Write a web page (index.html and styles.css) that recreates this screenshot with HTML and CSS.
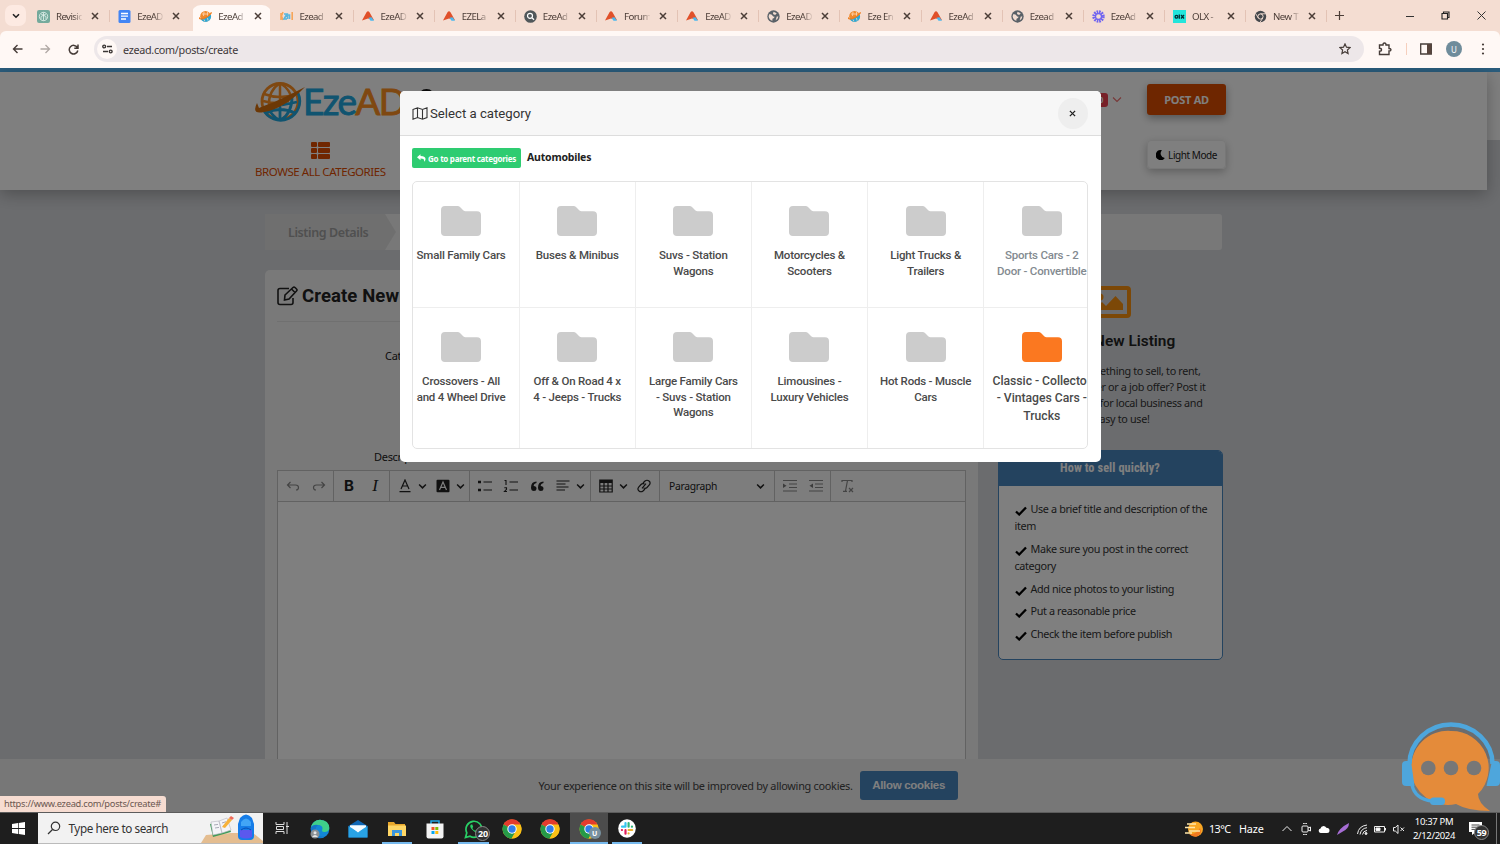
FILE: index.html
```html
<!DOCTYPE html>
<html lang="en">
<head>
<meta charset="utf-8">
<title>EzeAD - Create New Listing</title>
<link rel="stylesheet" href="styles.css">
</head>
<body>
<svg class="defs" width="0" height="0">
  <symbol id="x" viewBox="0 0 8 8"><path d="M1 1l6 6M7 1L1 7" fill="none" stroke="currentColor" stroke-width="1.500"/></symbol>
  <symbol id="folder" viewBox="0 0 40 30"><path d="M4 0h12.500q1.500 0 2.500 1l3.500 3.500q.8.800 2 .8H36q4 0 4 4V26q0 4-4 4H4q-4 0-4-4V4q0-4 4-4z" fill="currentColor"/></symbol>
  <symbol id="tri" viewBox="0 0 12 10"><path d="M4.500 1.200q1.500-2 3 0L12 9.300 6 7.500 0 9.500z" fill="#e0502a"/><path d="M6.500 6.800l3-.6 2.500 3.600H8.500z" fill="#4ab9f0"/></symbol>
  <symbol id="planet" viewBox="0 0 13 13"><circle cx="6.500" cy="6.300" r="5.300" fill="#f08a2c"/><path d="M1.500 8.500Q8 8.500 11.700 4.500A5.300 5.300 0 0 1 1.500 8.500z" fill="#2aa8d8"/><path d="M3 4h6.500M5 2L4.500 6M8.500 2v4M5 9.500l1 1.800M8.500 8l.5 2.500" fill="none" stroke="#ffd8b8" stroke-width=".8"/><path d="M.5 7.300Q0 9.500 3.500 8.800 9 7.500 12.600 2.500" fill="none" stroke="#ef7d1d" stroke-width="1.300"/></symbol>
  <symbol id="globe" viewBox="0 0 12 12"><circle cx="6" cy="6" r="5.700" fill="#5a6168"/><path d="M2 4q2-.5 3 1t2 1q0 2-2 2v2Q2 9 1.500 6zM6 1.500l3 1.500-1.500 1.500-2-.8zM9 6l1.500 0Q10 9 8 9.500z" fill="#f3ddd2"/></symbol>
  <symbol id="chrome" viewBox="0 0 20 20"><circle cx="10" cy="10" r="9.500" fill="#fbc116"/><path d="M10 10L1.500 5.500A9.500 9.500 0 0 1 18.400 5.500z" fill="#e33b2e"/><path d="M10 10L1.600 5.500A9.500 9.500 0 0 0 9.600 19.500L14 12z" fill="#269a48"/><path d="M10 5.500h8.400a9.500 9.500 0 0 1-8.800 14L14 12z" fill="#fbc116"/><circle cx="10" cy="10" r="4.700" fill="#fff"/><circle cx="10" cy="10" r="3.700" fill="#2f7de9"/></symbol>
  <symbol id="chev" viewBox="0 0 8 6"><path d="M1 1.200l3 3 3-3" fill="none" stroke="currentColor" stroke-width="1.300"/></symbol>
  <symbol id="check" viewBox="0 0 12 10"><path d="M1 5.500l3.200 3L11 1.500" fill="none" stroke="#000" stroke-width="2.300"/></symbol>
</svg>
<div class="screen">
<header class="browser">
  <div class="tabstrip">
    <div class="tabsearch"><svg width="8" height="6"><path d="M1 1.200l3 3 3-3" fill="none" stroke="#222" stroke-width="1.600"/></svg></div>
    <div class="tab"><svg class="fav" viewBox="0 0 13 13"><rect width="13" height="13" rx="2" fill="#74aa9c"/><g fill="none" stroke="#e4f2ee" stroke-width=".8"><circle cx="6.500" cy="6.500" r="4.200"/><path d="M4 4l5 2.500v3M9 4L4 6.500v3M6.500 2.500v8"/></g></svg><span class="label">Revisio</span><svg class="close"><use href="#x"/></svg></div>
    <div class="tab"><svg class="fav" viewBox="0 0 13 13"><rect x=".5" width="12" height="13" rx="1.500" fill="#4285f4"/><path d="M3 3.500h7M3 6.200h7M3 9h5" stroke="#fff" stroke-width="1.300"/></svg><span class="label">EzeAD</span><svg class="close"><use href="#x"/></svg></div>
    <div class="tab active"><svg class="fav"><use href="#planet"/></svg><span class="label">EzeAd</span><svg class="close"><use href="#x"/></svg></div>
    <div class="tab"><svg class="fav" viewBox="0 0 13 13"><g fill="none" stroke-width="1.600"><path d="M1 3v7M3 2L1.500 6 3 10" stroke="#f6a55a"/><path d="M4 4h3L4 9h3M7.500 9V5h2v4" stroke="#58b5dc"/><path d="M12.200 2v8" stroke="#f6a55a"/></g></svg><span class="label">Ezead</span><svg class="close"><use href="#x"/></svg></div>
    <div class="tab"><svg class="fav tri"><use href="#tri"/></svg><span class="label">EzeAD</span><svg class="close"><use href="#x"/></svg></div>
    <div class="tab"><svg class="fav tri"><use href="#tri"/></svg><span class="label">EZELa</span><svg class="close"><use href="#x"/></svg></div>
    <div class="tab"><svg class="fav" viewBox="0 0 13 13"><circle cx="6.500" cy="6.500" r="6.300" fill="#50575a"/><circle cx="6" cy="5.800" r="2.500" fill="none" stroke="#fff" stroke-width="1.200"/><path d="M8 7.800l2 2" stroke="#fff" stroke-width="1.300"/></svg><span class="label">EzeAd</span><svg class="close"><use href="#x"/></svg></div>
    <div class="tab"><svg class="fav tri"><use href="#tri"/></svg><span class="label">Forum</span><svg class="close"><use href="#x"/></svg></div>
    <div class="tab"><svg class="fav tri"><use href="#tri"/></svg><span class="label">EzeAD</span><svg class="close"><use href="#x"/></svg></div>
    <div class="tab"><svg class="fav"><use href="#globe"/></svg><span class="label">EzeAD</span><svg class="close"><use href="#x"/></svg></div>
    <div class="tab"><svg class="fav"><use href="#planet"/></svg><span class="label">Eze En</span><svg class="close"><use href="#x"/></svg></div>
    <div class="tab"><svg class="fav tri"><use href="#tri"/></svg><span class="label">EzeAd</span><svg class="close"><use href="#x"/></svg></div>
    <div class="tab"><svg class="fav"><use href="#globe"/></svg><span class="label">Ezead</span><svg class="close"><use href="#x"/></svg></div>
    <div class="tab"><svg class="fav" viewBox="0 0 13 13"><circle cx="6.500" cy="6.500" r="4.700" fill="none" stroke="#6f63f0" stroke-width="3" stroke-dasharray="1.600 .86"/><circle cx="6.500" cy="6.500" r="3" fill="none" stroke="#6f63f0" stroke-width="1.300"/></svg><span class="label">EzeAd</span><svg class="close"><use href="#x"/></svg></div>
    <div class="tab"><svg class="fav" viewBox="0 0 13 13"><rect width="13" height="13" fill="#23e5db"/><circle cx="3.500" cy="6.700" r="1.400" fill="none" stroke="#002f34" stroke-width="1.300"/><path d="M6.300 4.500v4.200M8 5l3 3.500M11 5L8 8.500" stroke="#002f34" stroke-width="1.300"/></svg><span class="label">OLX -</span><svg class="close"><use href="#x"/></svg></div>
    <div class="tab"><svg class="fav" viewBox="0 0 13 13"><circle cx="6.500" cy="6.500" r="5.700" fill="#45484c"/><circle cx="6.500" cy="6.500" r="2.600" fill="#45484c" stroke="#f3ddd2"/><path d="M6.500 3.800h5.300M4.300 8L1.600 3.500M8.800 8L6 12.300" stroke="#f3ddd2" stroke-width=".9"/></svg><span class="label">New T</span><svg class="close"><use href="#x"/></svg></div>
    <svg class="plus" width="9" height="9"><path d="M4.500 0v9M0 4.500h9" stroke="#4b3d37" stroke-width="1.200"/></svg>
    <div class="winbtns">
      <svg width="8" height="10"><path d="M0 5.500h8" stroke="#333"/></svg>
      <svg width="9" height="9" fill="none" stroke="#222" stroke-width="1.100"><path d="M1 2.500h5.500V8H1zM2.500 2V1H8v5.500H7"/></svg>
      <svg width="9" height="9"><path d="M.5.500l8 8M8.500.500l-8 8" stroke="#333"/></svg>
    </div>
  </div>
  <div class="addressbar">
    <div class="nav">
      <svg width="11" height="10" fill="none" stroke="#463c38" stroke-width="1.400"><path d="M10.500 5H1.500M5.500 1L1.500 5l4 4"/></svg>
      <svg width="11" height="10" fill="none" stroke="#b0a8a4" stroke-width="1.300"><path d="M.5 5h9M5.500 1l4 4-4 4"/></svg>
      <svg width="11" height="11" fill="none" stroke="#463c38" stroke-width="1.500"><path d="M9.300 3.500A4.300 4.300 0 1 0 9.800 6.500M10 .5v3.700H6.300"/></svg>
    </div>
    <div class="omnibox">
      <span class="site"><svg width="11" height="10" fill="none" stroke="#3b3634" stroke-width="1.400"><circle cx="2.200" cy="2.500" r="1.400"/><path d="M5 2.500h5M1 7.500h5"/><circle cx="8.700" cy="7.500" r="1.400"/></svg></span>
      <span class="url">ezead.com/posts/create</span>
      <svg class="star" width="12" height="12"><path d="M6 .9l1.500 3.300 3.500.4-2.600 2.400.7 3.600L6 8.800l-3.100 1.800.7-3.600L1 4.600l3.500-.4z" fill="none" stroke="#463c38" stroke-width="1.200"/></svg>
    </div>
    <div class="tools">
      <svg width="14" height="14"><path d="M1.500 3h3.500q0-2 1.500-2t1.500 2h3v3.500q2 0 2 1.200t-2 1.300V12.500H1.500V9.300q2 0 2-1.500t-2-1.500z" fill="none" stroke="#463c38" stroke-width="1.400"/></svg>
      <i class="toolsep"></i>
      <svg width="12" height="12"><path d="M.7 1h10.600v10H.7z" fill="none" stroke="#463c38" stroke-width="1.300"/><path d="M7 1h4.300v10H7z" fill="#57443c"/></svg>
      <b class="avatar">U</b>
      <svg class="dots" width="4" height="12" fill="#463c38"><circle cx="2" cy="1.500" r="1.100"/><circle cx="2" cy="6" r="1.100"/><circle cx="2" cy="10.500" r="1.100"/></svg>
    </div>
  </div>
</header>

<main class="page">
  <div class="strip"></div>
  <div class="topbg"><div class="header">
    <div class="row1">
      <div class="logo">
        <svg width="52" height="42" viewBox="0 0 52 42"><circle cx="25" cy="20.500" r="18" fill="none" stroke="#ff9022" stroke-width="2.800"/><g fill="none" stroke="#ff9022" stroke-width="2.500"><path d="M9 13q16 6 32 0M25 2v20M25 2Q13 10 14 25M25 2q11 7 12 17M8 20q14 4 26 0"/></g><g fill="none" stroke="#20a8e0" stroke-width="2.800"><path d="M8 28a18.500 18.500 0 0 0 35-16M11 32q14-7 29 0M25 24v15M14 28q3 7 10 11M37 16q0 16-11 23M27 24l15-3"/></g><path d="M2 22Q-4 34 9 31 29 28 50 6 33 15 17 22 8 25 4 27z" fill="#d9700c"/></svg>
        <span class="word"><span>Eze</span><em>AD</em></span>
        <i class="pin"></i>
      </div>
      <div class="account"><span class="badge">0</span><svg width="10" height="7"><path d="M1 1.500l4 4 4-4" fill="none" stroke="#f07070" stroke-width="1.100"/></svg><a class="post">POST AD</a></div>
    </div>
    <div class="row2">
      <div class="browse"><svg width="19" height="17" fill="#e04c00"><rect y="0" width="6" height="5" rx="1"/><rect x="7" width="12" height="5" rx="1"/><rect y="6" width="6" height="5" rx="1"/><rect x="7" y="6" width="12" height="5" rx="1"/><rect y="12" width="6" height="5" rx="1"/><rect x="7" y="12" width="12" height="5" rx="1"/></svg><span>BROWSE ALL CATEGORIES</span></div>
      <a class="mode"><svg width="9" height="10"><path d="M6 .3A5 5 0 1 0 8.800 8 4.500 4.500 0 0 1 6 .3z"/></svg>Light Mode</a>
    </div>
  </div></div>
  <div class="wrap">
    <div class="steps"><span class="step">Listing Details</span></div>
    <div class="columns">
      <section class="card">
        <h1><svg width="22" height="20" fill="none" stroke="#222" stroke-width="1.600"><path d="M12 2.500H3q-2 0-2 2v12q0 2 2 2h11q2 0 2-2V12"/><path d="M8 9l8-7.500q1-.9 2 0l1.500 1.500q1 1 0 2L12 13l-4.500 1zM14.500 3l3.500 3.500"/></svg>Create New Listing</h1>
        <div class="field cat">Category *</div>
        <div class="field desc">Description *</div>
        <div class="editor">
          <div class="edbar">
            <div class="grp dim"><svg class="ic" viewBox="0 0 14 14"><path d="M4.500 3L1.500 6l3 3M1.500 6h8q3 0 3 2.500T10 11" /></svg><svg class="ic" viewBox="0 0 14 14"><path d="M9.500 3l3 3-3 3M12.500 6h-8q-3 0-3 2.500T4 11"/></svg></div>
            <div class="grp"><b class="ic bold">B</b><i class="ic ital">I</i></div>
            <div class="grp"><svg class="ic" viewBox="0 0 14 14"><path d="M3 10l4-9 4 9M4.500 7h5M1.500 12.700h11"/></svg><svg class="cv"><use href="#chev"/></svg><svg class="ic" viewBox="0 0 14 14"><rect x=".5" y=".8" width="13" height="12.400" rx="1" fill="#222" stroke="none"/><path d="M3.500 11L7 3l3.500 8M5 8.300h4" stroke="#fff"/></svg><svg class="cv"><use href="#chev"/></svg></div>
            <div class="grp"><svg class="ic" viewBox="0 0 14 14"><path d="M5.500 3H14M5.500 11H14"/><path d="M0 3h3M0 11h3" stroke-width="2.600"/></svg><svg class="ic" viewBox="0 0 14 14"><path d="M5.500 3H14M5.500 11H14M.5 1.500H2V6M.3 8.800h2.200v1.500L.5 12.500h2.500" stroke-width="1.100"/></svg><svg class="ic" viewBox="0 0 14 14"><path d="M6.500 2.500Q1 2.500 1 8.500 1 12 4 12q2.500 0 2.500-2.300Q6.500 7 3.700 7q0-2.500 2.800-3zM13.500 2.500Q8 2.500 8 8.500q0 3.500 3 3.500 2.500 0 2.500-2.300Q13.500 7 10.700 7q0-2.500 2.800-3z" fill="#222" stroke="none"/></svg><svg class="ic" viewBox="0 0 14 14"><path d="M.5 2h13M.5 5h9M.5 8h12M.5 11h8.500"/></svg><svg class="cv"><use href="#chev"/></svg></div>
            <div class="grp"><svg class="ic" viewBox="0 0 14 14"><path d="M.8 1h12.400v12H.8zM1 7h12M1 10h12M5 4v9M9 4v9"/><path d="M1 2.500h12" stroke-width="3"/></svg><svg class="cv"><use href="#chev"/></svg><svg class="ic" viewBox="0 0 14 14"><path d="M6 4l2-2q2-1.500 4 0t.3 4L10 8.500q-1.500 1.500-3.500.5M8 10l-2 2q-2 1.500-4 0t-.3-4L4 5.500Q5.500 4 7.500 5M5 9.300l4-4.600"/></svg></div>
            <div class="grp para"><span>Paragraph</span><svg class="cv"><use href="#chev"/></svg></div>
            <div class="grp dim"><svg class="ic" viewBox="0 0 14 14"><path d="M0 1.500h14M6 5h8M6 8.500h8M0 12h14"/><path d="M0 4.500l3.500 2.300L0 9z" fill="#777" stroke="none"/></svg><svg class="ic" viewBox="0 0 14 14"><path d="M0 1.500h14M6 5h8M6 8.500h8M0 12h14"/><path d="M4 4.500L.5 6.800 4 9z" fill="#777" stroke="none"/></svg></div>
            <div class="grp dim last"><svg class="ic" viewBox="0 0 14 14"><path d="M2 3V1.500h10V3M7.500 1.500L5.500 12M3 12.300h4M9 9l4 4M13 9l-4 4"/></svg></div>
          </div>
        </div>
      </section>
      <aside>
        <svg class="pic" width="42" height="32"><rect x="2" y="2" width="38" height="28" rx="2" fill="none" stroke="#f9910f" stroke-width="4"/><circle cx="11" cy="11" r="3.500" fill="#f9910f"/><path d="M7 24v-2l6-6 4 4 9.500-10 7.500 8v6z" fill="#f9910f"/></svg>
        <h2>Create New Listing</h2>
        <p class="blurb"><span class="l1">Do you have something to sell, to rent,</span><span class="l2">any service to offer or a job offer? Post it</span><span class="l3">at EzeAd for local business and</span><span class="l4">more. It's easy to use!</span></p>
        <div class="tips">
          <h3>How to sell quickly?</h3>
          <ul>
            <li><svg width="12" height="10"><use href="#check"/></svg>Use a brief title and description of the<br>item</li>
            <li><svg width="12" height="10"><use href="#check"/></svg>Make sure you post in the correct<br>category</li>
            <li><svg width="12" height="10"><use href="#check"/></svg>Add nice photos to your listing</li>
            <li><svg width="12" height="10"><use href="#check"/></svg>Put a reasonable price</li>
            <li><svg width="12" height="10"><use href="#check"/></svg>Check the item before publish</li>
          </ul>
        </div>
      </aside>
    </div>
  </div>
  <div class="cookies"><span>Your experience on this site will be improved by allowing cookies.</span><a>Allow cookies</a></div>
  <div class="overlay"></div>
  <div class="modal">
    <div class="mhead"><svg width="16" height="13" fill="none" stroke="#333" stroke-width="1.100"><path d="M1 2.500l4.500-1.700 5 1.700L15 .8v9.700l-4.500 1.700-5-1.700L1 12.200zM5.500.8v9.700M10.500 2.500v9.700"/></svg><span>Select a category</span><b class="mclose"><svg width="7" height="7"><use href="#x"/></svg></b></div>
    <div class="mbody">
      <div class="crumb"><a><svg width="9" height="8"><path d="M0 3.200L3.500.2v1.800Q9 2 8.500 5.500 8.300 7 7 7.800 8 4.500 3.500 4.500v1.800z" fill="#fff"/></svg>Go to parent categories</a><b>Automobiles</b></div>
      <div class="cats"><div class="catgrid">
        <div class="c"><svg><use href="#folder"/></svg><span>Small Family Cars</span></div>
        <div class="c"><svg><use href="#folder"/></svg><span>Buses &amp; Minibus</span></div>
        <div class="c"><svg><use href="#folder"/></svg><span>Suvs - Station<br>Wagons</span></div>
        <div class="c"><svg><use href="#folder"/></svg><span>Motorcycles &amp;<br>Scooters</span></div>
        <div class="c"><svg><use href="#folder"/></svg><span>Light Trucks &amp;<br>Trailers</span></div>
        <div class="c fade"><svg><use href="#folder"/></svg><span>Sports Cars - 2<br>Door - Convertible</span></div>
        <div class="c"><svg><use href="#folder"/></svg><span>Crossovers - All<br>and 4 Wheel Drive</span></div>
        <div class="c"><svg><use href="#folder"/></svg><span>Off &amp; On Road 4 x<br>4 - Jeeps - Trucks</span></div>
        <div class="c"><svg><use href="#folder"/></svg><span>Large Family Cars<br>- Suvs - Station<br>Wagons</span></div>
        <div class="c"><svg><use href="#folder"/></svg><span>Limousines -<br>Luxury Vehicles</span></div>
        <div class="c"><svg><use href="#folder"/></svg><span>Hot Rods - Muscle<br>Cars</span></div>
        <div class="c hot"><svg><use href="#folder"/></svg><span>Classic - Collector<br>- Vintages Cars -<br>Trucks</span></div>
      </div></div>
    </div>
  </div>
  <svg class="chat" width="98" height="90" viewBox="0 0 98 90"><path d="M49 9a37 37 0 1 0 5 73q12 7 34 7-12-8-12-17A37 37 0 0 0 49 9z" fill="#e48b3a"/><g fill="#777"><circle cx="26.300" cy="46" r="7.300"/><circle cx="49" cy="46" r="7.300"/><circle cx="72" cy="46" r="7.300"/></g><path d="M7.500 42A41.500 39.500 0 0 1 90.500 42" fill="none" stroke="#4ea6dc" stroke-width="4.500"/><path d="M4 39h5l3.500 25H4q-4 0-4-4V43q0-4 4-4zM90 39h4q4 0 4 4v17q0 4-4 4H84.500z" fill="#4ea6dc"/><path d="M10 63q3 14 20 16" fill="none" stroke="#4ea6dc" stroke-width="3.500"/><rect x="28" y="75.500" width="15" height="7.500" rx="3.500" fill="#4ea6dc"/></svg>
  <div class="status">https://www.ezead.com/posts/create#</div>
</main>

<footer class="taskbar">
  <div class="start"><svg width="13" height="13" fill="#fff"><path d="M0 2l6-.9v5H0zM6.700 1L13 0v6.100H6.700zM0 6.900h6v5L0 11zM6.700 6.900H13V13l-6.300-1z"/></svg></div>
  <div class="search"><svg width="14" height="14" fill="none" stroke="#333" stroke-width="1.200"><circle cx="8.500" cy="5.300" r="4.200"/><path d="M5.500 8.500L1 13"/></svg><span>Type here to search</span>
    <svg class="art" width="62" height="30"><path d="M0 30l5-8 25-2h22l10 8v2z" fill="#e4bd90"/><path d="M9 11l17-4 4 12-18 5z" fill="#3d9b57"/><path d="M10 9l8-1 3 12-9 2zM18 8l8-3 4 12-9 3z" fill="#f4f4f8" stroke="#b5b5c0" stroke-width=".6"/><path d="M13 12l4-.6M14 15l4-.6M21 10l4-1.300M22 13l4-1.300" stroke="#889" stroke-width=".7"/><path d="M21 14l7-9 3 2-7 8z" fill="#f7b23b"/><path d="M28 5l2-2 3 2-2 2z" fill="#f06a5a"/><path d="M39 5q6-7 12 0l2 6v12q0 4-4 4h-8q-4 0-4-4V11z" fill="#167de8"/><path d="M40 9q5-7 10 0v4H40z" fill="#42a5f6"/><path d="M39 17h12v7q-6 3-12 0z" fill="#5b58ee"/><path d="M40 17q5-4 10 0" fill="none" stroke="#0a4eb4"/></svg></div>
  <div class="t"><svg width="14" height="13" fill="none" stroke="#ddd"><path d="M1 0v2.500h8V0M1 12v-2.500h8V12M1.500 4.500h7v3h-7zM12 0v12M11 4.500h3"/></svg></div>
  <div class="t"><svg width="20" height="20"><circle cx="10" cy="10" r="9.300" fill="#1287d6"/><path d="M1 8Q3 1 10 .7q9 .3 9.300 8.300-.3 4-5 4-3 0-2-2.500 1-3.500-3-4.500Q4 5.500 1 8z" fill="#3fd08a"/><path d="M1 8q3-3 7-2Q4 9 6 14t10 3Q10 21 4 17 0 13 1 8z" fill="#1476c8"/><circle cx="5" cy="15" r="4.500" fill="#8a9094"/><circle cx="5" cy="13.700" r="1.500" fill="#e5e5e5"/><path d="M2 18q3-4 6 0" fill="#e5e5e5"/></svg></div>
  <div class="t"><svg width="20" height="18"><path d="M.5 6L10 0l9.500 6v11.500H.5z" fill="#0f66b4"/><path d="M2 5.500h16v8H2z" fill="#f5fbff"/><path d="M.5 6l9.500 6 9.500-6v11.500H.5z" fill="#29a3e6"/><path d="M2 5.500h16l-8 7z" fill="#f5fbff"/></svg></div>
  <div class="t on"><svg width="18" height="16"><path d="M0 1h6l1.500 2H17v12H0z" fill="#e9a82c"/><path d="M0 4.500h18V15H0z" fill="#ffd766"/><path d="M4 15V9h10v6h-3v-3H7v3z" fill="#3c96dc"/></svg></div>
  <div class="t"><svg width="18" height="20"><path d="M5 5V2h8v3" fill="none" stroke="#22a8e8" stroke-width="1.500"/><path d="M.5 4.500h17v13q0 2-2 2h-13q-2 0-2-2z" fill="#f4f4f4"/><path d="M5.500 8h3v3h-3z" fill="#f35325"/><path d="M9.300 8h3v3h-3z" fill="#81bc06"/><path d="M5.500 12h3v3h-3z" fill="#05a6f0"/><path d="M9.300 12h3v3h-3z" fill="#ffba08"/></svg></div>
  <div class="t on"><svg width="20" height="20" fill="none" stroke="#29cf66" stroke-width="1.700"><path d="M1.500 18.500l1.300-4.700A8 8 0 1 1 6 17.200z"/><path d="M7 5.500q-2 1.500 1 5t6 3q1.500-1.500 0-2l-1.500-.8-1.300 1Q9 11 8.300 9l.9-1-.9-2.500z" fill="#29cf66" stroke="none"/></svg><b class="n20">20</b></div>
  <div class="t"><svg width="20" height="20"><use href="#chrome"/></svg></div>
  <div class="t"><svg width="20" height="20"><use href="#chrome"/></svg></div>
  <div class="t on cur"><svg width="20" height="20"><use href="#chrome"/></svg><b class="nu">U</b></div>
  <div class="t on"><svg width="18" height="19"><ellipse cx="9" cy="9.500" rx="8.800" ry="9.300" fill="#fff"/><g stroke-width="2.200" stroke-linecap="round"><path d="M7.500 4v3.200M4 7.700h3.500" stroke="#36c5f0"/><path d="M10.600 4v3.700M14 7.700h-.1" stroke="#2eb67d"/><path d="M10.600 11h3.600M10.600 14.500v-.1" stroke="#ecb22e"/><path d="M7.500 11.200v3.500M3.900 11h.1" stroke="#e01e5a"/></g></svg></div>
  <div class="tray">
    <svg class="sun" width="20" height="18"><circle cx="11.500" cy="9" r="7.500" fill="#f8a623"/><path d="M5 14q7 1 11-6 3 6-3 8.500-4 1-8-2.500z" fill="#f27a21"/><path d="M3 4h9M1 7.500h10M5 11h11M1 13h7" stroke="#ffe6a8" stroke-width="1.300"/></svg>
    <span class="temp">13°C</span><span class="haze">Haze</span>
    <div class="icons">
      <svg viewBox="0 0 12 12"><path d="M1.500 8L6 3.500 10.500 8"/></svg>
      <svg viewBox="0 0 12 12"><rect x="2" y="3" width="6" height="6" rx="1"/><path d="M8 5l2.500-1v4L8 7M3 .5q2-.8 4 0M3 11.500q2 .8 4 0"/></svg>
      <svg viewBox="0 0 12 12"><path d="M2.500 10a2.300 2.300 0 0 1 0-4.500Q3 3 5.500 3q2 0 2.800 1.800Q11.500 5 11.500 7.500 11.500 10 9 10z" fill="#fff" stroke="none"/></svg>
      <svg viewBox="0 0 12 12"><path d="M0 12Q2 5 12 0 12 6 5 9z" fill="#a66dd4" stroke="none"/></svg>
      <svg viewBox="0 0 12 12"><path d="M1.500 11Q2.500 3 11 2M4 11.500Q5 5.500 11 4.700M6.500 11.500Q7 8 11 7.400"/><circle cx="10" cy="10.500" r="1" fill="#eee"/></svg>
      <svg viewBox="0 0 12 12"><path d="M.5 3.500h10v5.500h-10zM11.500 5v2.500"/><path d="M2 5h4v2.500H2z" fill="#fff"/></svg>
      <svg viewBox="0 0 12 12"><path d="M.5 4.500h1.800L5 2v8.500L2.300 8H.5zM7.500 4.500l3.500 3.500M11 4.500L7.500 8"/></svg>
    </div>
    <div class="clock">10:37 PM<br>2/12/2024</div>
    <div class="notif"><svg width="14" height="14"><path d="M0 0h13v10H7l-4 3v-3H0z" fill="#fff"/><path d="M2.500 3h8M2.500 5.200h8M2.500 7.400h5" stroke="#333" stroke-width=".9"/></svg><b>59</b></div>
  </div>
</footer>
</div>
</body>
</html>
```
FILE: styles.css
```css
* { box-sizing: border-box; }
body { margin: 0; font-family: "Noto Sans", "Open Sans", sans-serif; }
.defs { position: absolute; }
.screen { width: 1500px; height: 844px; overflow: hidden; display: flex; flex-direction: column; }
h1, h2, h3, p, ul { margin: 0; padding: 0; }
svg { flex: none; display: block; }

/* Browser window */
.browser { height: 68px; flex: none; background: #f4ddd2; }
.tabstrip { height: 31px; display: flex; align-items: center; padding-left: 5px; color: #4b3d37; }
.tabsearch { width: 21px; height: 21px; margin-right: 3px; border-radius: 7px; background: #fdeae2; display: grid; place-items: center; color: #222; }
.tab { width: 81.15px; height: 26px; margin-top: 1px; flex: none; display: flex; align-items: center; padding-left: 8px; position: relative; }
.tab:not(.active)::after { content: ""; width: 1px; height: 12px; background: #e3c3b5; margin-left: 10px; }
.tab.active { height: 26px; margin-top: 5px; padding-bottom: 4px; background: linear-gradient(#fff8f5, #fff8f5) 2px 0 / 77px 26px no-repeat; border-radius: 10px 10px 0 0; }
.tab:nth-child(3)::after { visibility: hidden; }
.fav { width: 13px; height: 13px; }
.fav.tri { width: 12px; height: 10px; margin-right: 1px; }
.label { width: 27px; margin-left: 6px; overflow: hidden; white-space: nowrap; font-size: 9.7px; letter-spacing: -.6px; -webkit-mask-image: linear-gradient(90deg, #000 65%, rgba(0,0,0,.1)); }
.close { width: 8px; height: 8px; margin-left: 9px; }
.plus { margin-left: 8px; }
.winbtns { margin-left: auto; display: flex; align-items: center; gap: 27px; padding-right: 14px; }
.addressbar { height: 37px; background: #fff8f5; border-radius: 6px 6px 0 0; display: flex; align-items: center; padding-bottom: 1px; }
.nav { width: 94px; display: flex; align-items: center; padding-left: 12px; gap: 17px; }
.omnibox { width: 1270px; height: 26px; border-radius: 13px; background: #ede7e9; display: flex; align-items: center; padding: 0 13px 0 3px; }
.site { width: 20px; height: 20px; border-radius: 50%; background: #fff8f5; display: grid; place-items: center; }
.url { margin-left: 6px; font-size: 10.8px; letter-spacing: -.3px; color: #40383a; }
.star { margin-left: auto; }
.tools { flex: 1; display: flex; align-items: center; padding-left: 14px; }
.toolsep { width: 1px; height: 12px; background: #f6cfbd; margin: 0 13px 0 14px; }
.avatar { width: 16px; height: 16px; margin: 0 19px 0 14px; border-radius: 50%; background: #6f8c9b; color: #fff; font-size: 8px; font-weight: 400; display: grid; place-items: center; }

/* Site */
.page { height: 745px; flex: none; position: relative; overflow: hidden; background: #d7d9dd; border-bottom: 1px solid #5c5c5c; }
.strip { height: 4px; background: #56bafa; }
.topbg { height: 118px; background: linear-gradient(#fff, #fff) 0 0 / 100% 68px no-repeat; }
.header { width: 1487px; height: 118px; background: #fff; box-shadow: 0 4px 16px rgba(0,0,0,.28); padding: 0 261px 0 255px; }
.row1 { height: 68px; display: flex; justify-content: space-between; align-items: flex-start; }
.logo { display: flex; padding-top: 9px; position: relative; }
.word { font: 37px/40px Lato, sans-serif; letter-spacing: -1.6px; margin-left: -4px; color: #20a8e0; -webkit-text-stroke: .9px; }
.word em { font-style: normal; color: #ff9022; }
.pin { position: absolute; left: 163px; top: 17px; width: 17px; height: 17px; border: 2px solid #111; border-radius: 50%; }
.account { display: flex; align-items: center; padding-top: 12px; }
.badge { background: #ee4050; color: #fff; font-size: 8px; font-weight: 700; width: 14px; height: 14px; border-radius: 3px; text-align: center; line-height: 14px; }
.account > svg { margin: 0 25px 0 4px; }
.post { width: 79px; height: 31px; border-radius: 3px; background: #dc4c00; color: #fff; font-size: 11px; font-weight: 700; text-align: center; line-height: 31px; letter-spacing: -.25px; box-shadow: 0 3px 8px rgba(0,0,0,.35); }
.row2 { display: flex; justify-content: space-between; align-items: flex-start; }
.browse { display: flex; flex-direction: column; align-items: center; gap: 5px; padding-top: 2px; color: #e04c00; font-size: 11.5px; line-height: 16px; letter-spacing: -.45px; white-space: nowrap; }
.mode { width: 79px; height: 29px; border: 1px solid #eee; border-radius: 4px; display: flex; align-items: center; justify-content: center; gap: 3px; font-size: 10px; letter-spacing: -.45px; color: #222; box-shadow: 0 3px 8px rgba(0,0,0,.25); }
.wrap { width: 957px; margin-left: 265px; padding-top: 24px; }
.steps { height: 36px; background: #f1f1f1; border-radius: 3px; }
.step { display: block; width: 131px; height: 36px; line-height: 37px; padding-left: 23px; background: #dfdfdf; clip-path: polygon(0 0, 120px 0, 131px 18px, 120px 100%, 0 100%); font-size: 12.5px; letter-spacing: -.4px; font-weight: 600; color: #a0a0a0; white-space: nowrap; }
.columns { display: flex; justify-content: space-between; margin-top: 20px; margin-right: -.5px; }
.card { width: 713px; height: 620px; background: #f3f3f3; border-radius: 5px; padding: 0 12px; }
h1 { height: 52px; border-bottom: 1px solid #e1e1e1; display: flex; align-items: center; gap: 3px; font: 700 18.5px Roboto, sans-serif; letter-spacing: .1px; color: #222; }
.field { font-size: 11px; letter-spacing: -.3px; color: #222; line-height: 16px; }
.cat { padding: 26px 0 0 108px; }
.desc { padding: 85px 0 0 97px; }
.editor { margin-top: 5px; height: 420px; border: 1px solid #c4c4c4; background: #fff; }
.edbar { height: 31px; display: flex; border-bottom: 1px solid #c4c4c4; background: #fafafa; }
.grp { display: flex; align-items: center; padding-left: 2px; border-right: 1px solid #c4c4c4; height: 30px; color: #222; }
.grp:nth-child(1), .grp:nth-child(2), .grp:nth-child(7) { width: 56px; }
.grp:nth-child(3) { width: 80px; }
.grp:nth-child(4) { width: 121px; }
.grp:nth-child(5) { width: 69px; }
.grp.para { width: 115px; padding: 0 6px 0 9px; justify-content: space-between; font-size: 10.3px; letter-spacing: -.3px; }
.grp.last { border: 0; padding-left: 3px; }
.ic { width: 26px; height: 14px; fill: none; stroke: #222; stroke-width: 1.2; flex: none; }
.dim .ic { stroke: #888; }
.bold, .ital { font: 700 15px/14px Inter, sans-serif; text-align: center; }
.ital { font: italic 17px/14px "Liberation Serif", serif; }
.cv { width: 9px; height: 7px; margin-right: 3px; }
aside { width: 225px; padding-top: 16px; }
.pic { margin: 0 auto; }
h2 { margin-top: 12px; font: 600 15.4px/22px Roboto, sans-serif; text-align: center; color: #222; white-space: nowrap; }
.blurb { margin-top: 11px; font-size: 10.8px; line-height: 16px; letter-spacing: -.33px; color: #333; text-align: right; }
.blurb span { display: block; white-space: nowrap; }
.l1 { padding-right: 22px; } .l2 { padding-right: 17px; } .l3 { padding-right: 20px; } .l4 { padding-right: 73px; }
.tips { height: 210px; margin-top: 23px; border: 1px solid #4886be; border-radius: 5px; background: #fff; overflow: hidden; }
h3 { height: 35px; background: #4886be; color: #fff; font: 700 12.3px/34px "Roboto Condensed", Roboto, sans-serif; text-align: center; letter-spacing: .08px; }
.tips ul { list-style: none; padding: 14px 0 0 16px; }
.tips li { font-size: 10.8px; line-height: 17.3px; letter-spacing: -.36px; color: #333; white-space: nowrap; margin-bottom: 5.2px; }
.tips li svg { display: inline-block; vertical-align: -3px; margin-right: 4px; }
.cookies { position: absolute; left: 0; right: 0; bottom: 0; height: 53px; background: #eee; display: flex; justify-content: center; align-items: center; gap: 7px; padding-right: 4px; font-size: 10.9px; letter-spacing: -.28px; color: #444; }
.cookies a { width: 98px; height: 29px; border-radius: 3px; background: #4886be; color: #fff; font: 700 11.5px/29px "Liberation Sans", sans-serif; text-align: center; letter-spacing: -.3px; }
.overlay { position: absolute; inset: 0; background: rgba(0,0,0,.5); }

/* Category dialog */
.modal { position: absolute; left: 399.5px; top: 23px; width: 701px; height: 371px; border-radius: 5px; background: #fff; overflow: hidden; }
.mhead { height: 45px; background: #f7f7f7; border-bottom: 1px solid #ddd; display: flex; align-items: center; padding: 0 13px 0 12px; font: 13.2px Roboto, sans-serif; color: #333; }
.mhead span { margin-left: 2.5px; }
.mclose { margin-left: auto; width: 30px; height: 31px; border-radius: 50%; background: #eee; display: grid; place-items: center; color: #222; }
.mbody { padding: 12px 12.5px; }
.crumb { display: flex; align-items: flex-start; gap: 6px; height: 33px; }
.crumb a { width: 109px; height: 20px; border-radius: 2px; background: #2ecc71; color: #fff; display: flex; align-items: center; justify-content: center; gap: 2px; font: 700 8px "Noto Sans", sans-serif; letter-spacing: -.28px; white-space: nowrap; }
.crumb b { font-size: 10.5px; line-height: 19px; letter-spacing: -.2px; color: #222; }
.cats { width: 676px; height: 268px; border: 1px solid #e3e3e3; border-radius: 5px; overflow: hidden; }
.catgrid { display: grid; grid-template-columns: repeat(6, 116.15px); grid-template-rows: 126px 142px; width: 697px; margin-left: -9.500px; }
.c { border-right: 1px solid #eee; border-bottom: 1px solid #eee; display: flex; flex-direction: column; align-items: center; padding-top: 24px; color: #ccc; }
.c svg { width: 40px; height: 30px; }
.c span { margin-top: 12px; font: 500 11.5px/15.7px Roboto, sans-serif; letter-spacing: -.2px; text-align: center; color: #4a4a4a; white-space: nowrap; }
.c.fade span { color: #838a90; }
.c.hot { color: #fb7820; }
.c.hot span { margin-top: 11px; font-size: 12.2px; line-height: 17.3px; letter-spacing: -.03px; }
.chat { position: absolute; right: 0; top: 654px; }
.status { position: absolute; left: 0; bottom: 0; width: 166px; height: 16px; background: #f6dcd1; border-radius: 0 3px 0 0; font-size: 9.3px; line-height: 16px; letter-spacing: -.28px; padding-left: 4px; color: #6b5750; white-space: nowrap; }

/* Taskbar */
.taskbar { flex: 1; background: #1e1e1e; display: flex; color: #fff; }
.start { width: 37.500px; display: grid; place-items: center; }
.search { width: 225px; background: #f2f2f2; display: flex; align-items: center; padding-left: 9px; border-bottom: 1px solid #bbb; color: #333; font-size: 11.7px; letter-spacing: -.42px; white-space: nowrap; }
.search span { margin-left: 8px; }
.art { margin-left: auto; }
.t { width: 38.400px; display: grid; place-items: center; position: relative; }
.t.on::after { content: ""; position: absolute; left: 4px; right: 4px; bottom: 0; height: 2px; background: #76b9ed; }
.cur { background: #4c4c4c; }
.t.cur::after { left: 0; right: 0; }
.n20, .nu, .notif b { position: absolute; border-radius: 50%; font-size: 9px; display: grid; place-items: center; }
.n20 { left: 21px; top: 13px; width: 15px; height: 15px; background: #333; border: 1px solid #888; letter-spacing: -.3px; }
.nu { left: 19px; top: 14px; width: 12px; height: 12px; background: #77909f; font-size: 7px; }
.tray { margin-left: auto; display: flex; align-items: center; font-size: 10.8px; letter-spacing: -.5px; padding-right: 3px; }
.temp { width: 30px; margin-left: 5px; }
.haze { width: 42px; letter-spacing: -.1px; }
.icons { display: flex; gap: 6.700px; }
.icons svg { width: 12px; height: 12px; fill: none; stroke: #eee; stroke-width: 1; }
.clock { width: 58px; font-size: 9.500px; line-height: 14px; letter-spacing: -.35px; text-align: center; }
.notif { width: 34px; height: 31px; padding: 9px 0 0 6px; position: relative; border-right: 1px solid #777; }
.notif b { left: 11px; top: 12px; width: 15px; height: 15px; background: #333; border: 1px solid #888; }
```
